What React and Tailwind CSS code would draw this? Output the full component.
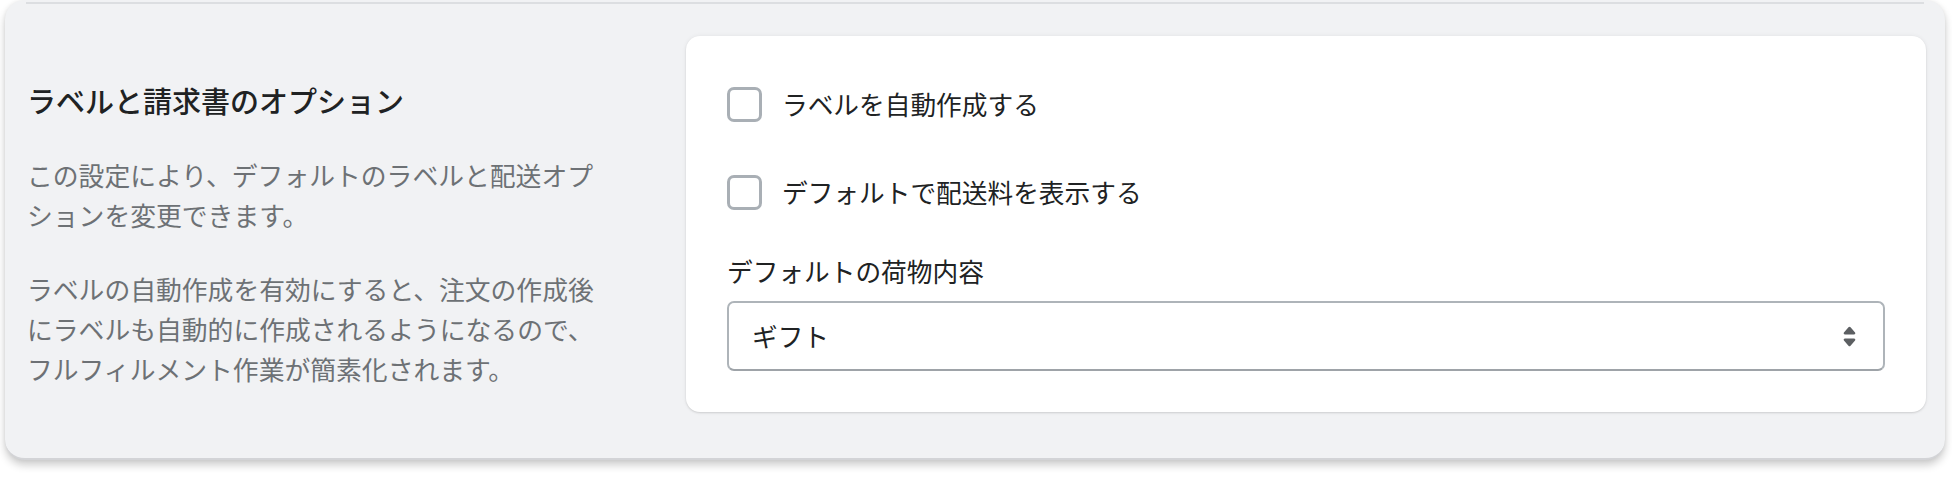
import React from 'react';

function Checkbox({ label }) {
  return (
    <label className="flex h-[54px] items-center gap-[20px]">
      <span className="h-[35px] w-[35px] shrink-0 rounded-[7px] border-[3px] border-[#a9afb5] bg-white" />
      <span className="text-[25.7px] leading-[40px] text-[#202223]">{label}</span>
    </label>
  );
}

export default function App() {
  return (
    <div className="h-[478px] w-[1952px] bg-white font-['Noto_Sans_CJK_JP','Noto_Sans',sans-serif]">
      {/* Section panel */}
      <div className="ml-[5px] flex h-[460px] w-[1940px] flex-col rounded-[20px] border-b-2 border-[#d3d4d7] bg-[#f1f2f4] shadow-[0_5px_9px_rgba(0,0,0,0.2),0_0_4px_rgba(0,0,0,0.06)]">
        <div className="mx-[21px] mt-[2px] h-[2px] bg-[#dcdee1]" />

        <div className="flex pl-[22px] pr-[19px] pt-[32px]">
          {/* Description */}
          <div className="w-[659px] shrink-0 pr-[75px] pt-[44px]">
            <h2 className="text-[29px] font-medium leading-[40px] text-[#202223]">
              ラベルと請求書のオプション
            </h2>
            <p className="mt-[35px] text-[25.8px] leading-[40px] text-[#6d7175]">
              この設定により、デフォルトのラベルと配送オプションを変更できます。
            </p>
            <p className="mt-[34px] text-[25.8px] leading-[40px] text-[#6d7175]">
              ラベルの自動作成を有効にすると、注文の作成後にラベルも自動的に作成されるようになるので、フルフィルメント作業が簡素化されます。
            </p>
          </div>

          {/* Card */}
          <div className="h-[376px] flex-1 rounded-[14px] bg-white px-[41px] pt-[41px] shadow-[0_0_5px_rgba(23,24,24,0.06),0_1px_2px_rgba(0,0,0,0.12)]">
            <Checkbox label="ラベルを自動作成する" />
            <div className="mt-[34px]">
              <Checkbox label="デフォルトで配送料を表示する" />
            </div>

            <div className="mt-[32px] text-[25.7px] leading-[40px] text-[#202223]">
              デフォルトの荷物内容
            </div>
            <div className="mt-[10px] flex h-[70px] items-center justify-between rounded-[7px] border-2 border-[#aeb4b9] border-b-[#9ea3a8] bg-white pl-[23px] pr-[14px]">
              <span className="text-[25.7px] leading-[40px] text-[#202223]">ギフト</span>
              <svg viewBox="0 0 20 20" className="h-[39px] w-[39px]" fill="#5c5f62">
                <path d="M7.676 9h4.648c.563 0 .879-.603.53-1.014L10.531 5.24a.708.708 0 0 0-1.062 0L7.145 7.986C6.798 8.397 7.113 9 7.676 9zm4.648 2H7.676c-.563 0-.878.603-.53 1.014l2.323 2.746a.708.708 0 0 0 1.062 0l2.324-2.746c.347-.411.032-1.014-.531-1.014z" />
              </svg>
            </div>
          </div>
        </div>
      </div>
    </div>
  );
}
